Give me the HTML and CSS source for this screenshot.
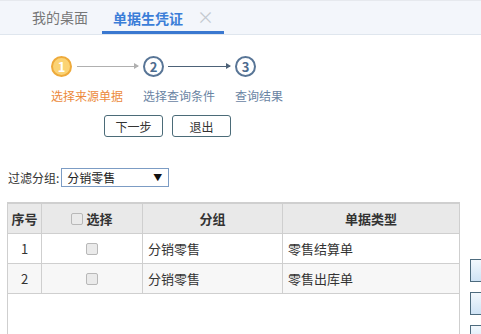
FILE: index.html
```html
<!DOCTYPE html>
<html lang="zh">
<head>
    <meta charset="UTF-8">
    <title>单据生凭证</title>
    <link rel="stylesheet" href="styles.css">
</head>
<body>
    <div class="tabbar">
        <div class="tab">我的桌面</div>
        <div class="tab active">单据生凭证<span class="tab-close">&times;</span></div>
    </div>

    <div class="steps">
        <div class="step done">
            <div class="step-head">
                <span class="circle">1</span>
                <span class="line light"></span>
            </div>
            <div class="step-label">选择来源单据</div>
        </div>
        <div class="step">
            <div class="step-head">
                <span class="circle">2</span>
                <span class="line"></span>
            </div>
            <div class="step-label">选择查询条件</div>
        </div>
        <div class="step last">
            <div class="step-head">
                <span class="circle">3</span>
            </div>
            <div class="step-label">查询结果</div>
        </div>
    </div>

    <div class="actions">
        <button type="button" class="btn">下一步</button>
        <button type="button" class="btn">退出</button>
    </div>

    <div class="filter">
        <label for="group">过滤分组:</label>
        <div class="select" id="group">分销零售<span class="arrow">&#9660;</span></div>
    </div>

    <div class="main">
        <div class="grid-box">
            <table class="grid">
                <thead>
                    <tr>
                        <th class="col-no">序号</th>
                        <th class="col-check"><span class="checkbox"></span>选择</th>
                        <th class="col-group">分组</th>
                        <th>单据类型</th>
                    </tr>
                </thead>
                <tbody>
                    <tr>
                        <td class="center">1</td>
                        <td class="center"><span class="checkbox"></span></td>
                        <td>分销零售</td>
                        <td>零售结算单</td>
                    </tr>
                    <tr class="alt">
                        <td class="center">2</td>
                        <td class="center"><span class="checkbox"></span></td>
                        <td>分销零售</td>
                        <td>零售出库单</td>
                    </tr>
                </tbody>
            </table>
        </div>
        <div class="side">
            <button type="button" class="side-btn"></button>
            <button type="button" class="side-btn"></button>
            <button type="button" class="side-btn"></button>
        </div>
    </div>
</body>
</html>
```

FILE: styles.css
```css
body {
    margin: 0;
    font-family: "Noto Sans CJK SC", "Liberation Sans", sans-serif;
    font-size: 12px;
    color: #333;
    background-color: #fff;
    width: 481px;
    height: 334px;
    overflow: hidden;
}
.tabbar {
    height: 33px;
    background-color: #f3f6fb;
    border-top: 1px solid #e6e9ee;
    border-bottom: 1px solid #dfe6ee;
    display: flex;
    padding-left: 24px;
}
.tab {
    font-size: 14px;
    color: #777;
    line-height: 33px;
    padding: 0 8px;
    margin-right: 6px;
    box-sizing: border-box;
    height: 33px;
}
.tab.active {
    color: #3b7ed8;
    font-weight: bold;
    padding: 0 10px 0 11px;
    border-bottom: 3px solid #3a78d0;
    line-height: 32px;
}
.tab-close {
    font-weight: normal;
    color: #c4c9d0;
    font-size: 17px;
    margin-left: 14px;
}
.steps {
    display: flex;
    padding: 21px 0 0 51px;
}
.step {
    width: 92px;
}
.step.last {
    width: auto;
}
.step-head {
    display: flex;
    align-items: center;
    height: 21px;
}
.circle {
    width: 21px;
    height: 21px;
    box-sizing: border-box;
    border-radius: 50%;
    border: 2px solid #587596;
    background-color: #fff;
    color: #4d6c8f;
    font-size: 13px;
    font-weight: bold;
    line-height: 17px;
    text-align: center;
}
.step.done .circle {
    border-color: #eeaa3b;
    background-color: #fbd374;
    color: #fff;
}
.line {
    position: relative;
    height: 1px;
    background-color: #4d6278;
    margin-left: 4px;
    width: 62px;
}
.line.light {
    background-color: #b0b0b0;
    margin-left: 5px;
    width: 61px;
}
.line::after {
    content: "";
    position: absolute;
    right: -1px;
    top: -3px;
    border-left: 5px solid #4d6278;
    border-top: 3.5px solid transparent;
    border-bottom: 3.5px solid transparent;
}
.line.light::after {
    border-left-color: #b0b0b0;
}
.step-label {
    margin-top: 10px;
    font-size: 12px;
    color: #6a84a3;
    white-space: nowrap;
}
.step.done .step-label {
    color: #ec8a3c;
}
.actions {
    display: flex;
    gap: 9px;
    padding: 11px 0 0 104px;
}
.btn {
    width: 59px;
    height: 22px;
    padding: 0;
    border: 1px solid #4b6b78;
    border-radius: 3px;
    background-color: #fff;
    font-family: inherit;
    font-size: 12px;
    color: #333;
}
.filter {
    display: flex;
    align-items: center;
    padding: 31px 0 0 8px;
}
.filter label {
    font-size: 12px;
    color: #333;
    margin-right: 2px;
}
.select {
    position: relative;
    width: 108px;
    height: 19px;
    box-sizing: border-box;
    border: 1px solid #7c9cc4;
    padding-left: 5px;
    font-size: 12px;
    line-height: 17px;
    color: #222;
}
.select .arrow {
    position: absolute;
    right: 6px;
    top: 0;
    font-size: 9px;
    color: #111;
}
.main {
    display: flex;
    margin-top: 15px;
    padding-left: 7px;
}
.grid-box {
    width: 453px;
    height: 140px;
    box-sizing: border-box;
    border: 1px solid #cfcfcf;
    border-top: 2px solid #cfcfcf;
    flex-shrink: 0;
}
.grid {
    width: 100%;
    border-collapse: collapse;
    font-size: 13px;
}
.grid th {
    height: 29px;
    background-color: #e9e9e9;
    font-weight: bold;
    font-size: 13px;
    color: #333;
    border-left: 1px solid #cfcfcf;
    border-bottom: 1px solid #cfcfcf;
    padding: 0;
}
.grid th:first-child,
.grid td:first-child {
    border-left: none;
}
.grid td {
    height: 29px;
    padding: 0 0 0 5px;
    border-left: 1px solid #cfcfcf;
    border-bottom: 1px solid #cfcfcf;
    color: #333;
}
.grid td.center {
    text-align: center;
    padding: 0;
}
.grid tr.alt td {
    background-color: #f7f7f7;
}
.col-no {
    width: 33px;
}
.col-check {
    width: 100px;
}
.col-group {
    width: 139px;
}
.checkbox {
    display: inline-block;
    width: 10px;
    height: 10px;
    border: 1px solid #b8b8b8;
    border-radius: 2px;
    background-color: #eaeaea;
    vertical-align: -1px;
}
th .checkbox {
    margin-right: 3px;
}
.side {
    display: flex;
    flex-direction: column;
    gap: 10px;
    padding: 57px 0 0 10px;
}
.side-btn {
    width: 50px;
    height: 23px;
    padding: 0;
    border: 1px solid #4d6b7e;
    background: linear-gradient(#f2f8fd, #cfe3f5);
    font-family: inherit;
    font-size: 12px;
}
```
